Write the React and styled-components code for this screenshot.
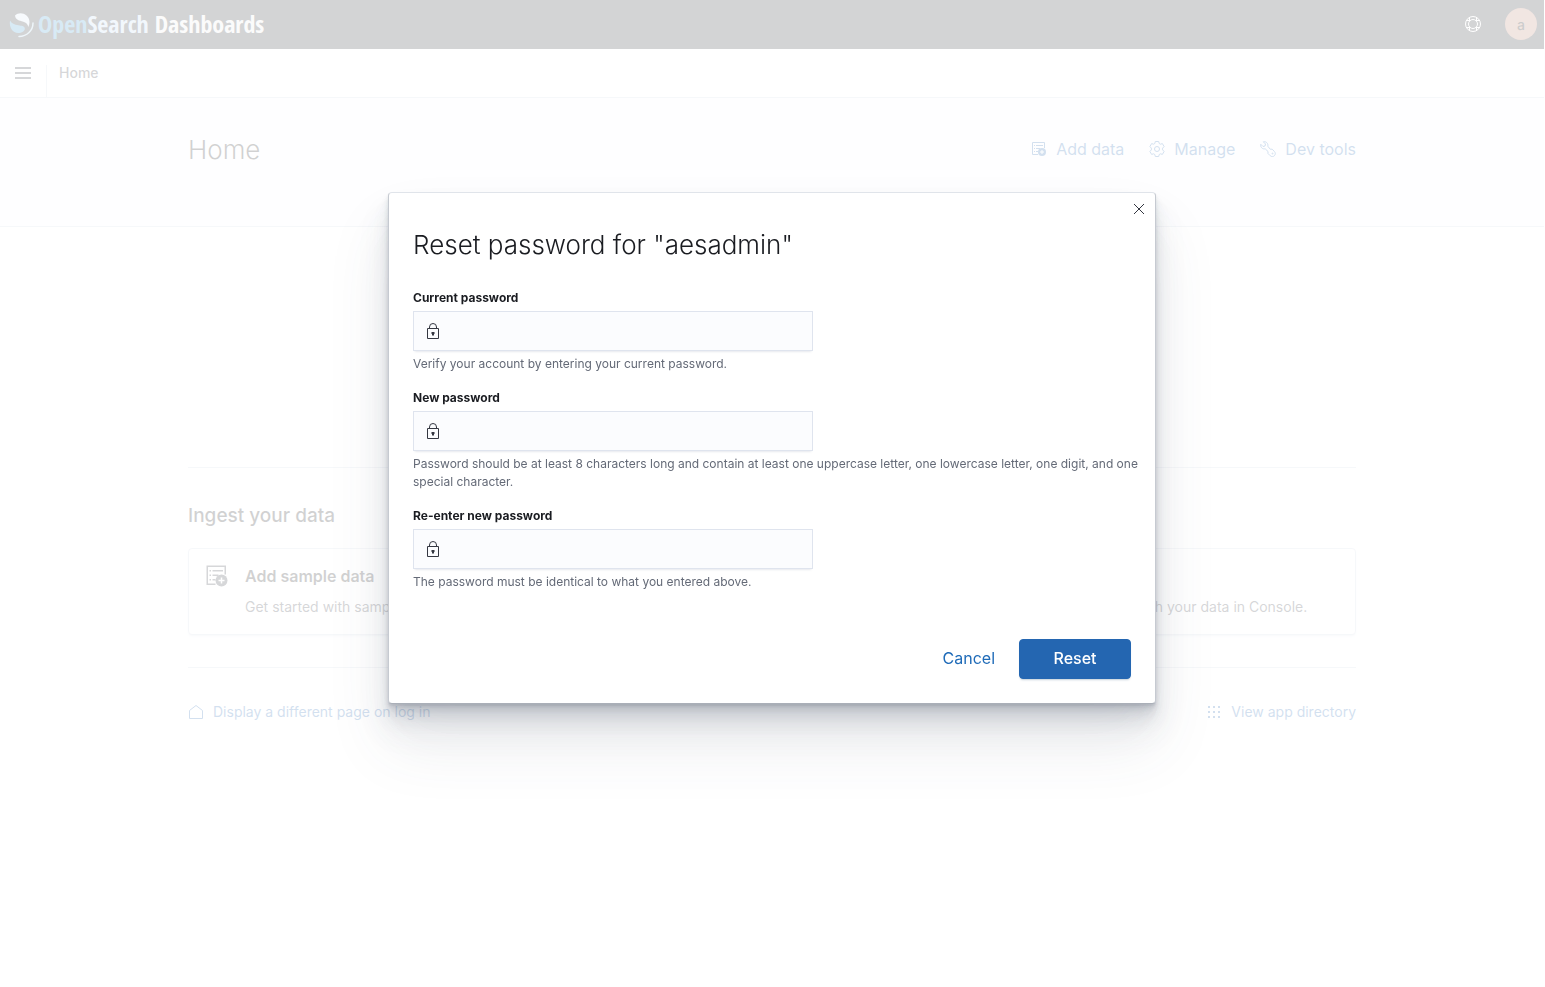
import React, { useState } from "react";
import styled, { createGlobalStyle } from "styled-components";

const GlobalStyle = createGlobalStyle`
  * {
    box-sizing: border-box;
  }

  body {
    margin: 0;
    padding-right: 1px;
    background-color: #fcfdfe;
    color: #1a1c21;
    font-family: Inter, "Liberation Sans", sans-serif;
    font-size: 14px;
  }

  button,
  input {
    font-family: inherit;
  }

  h1,
  h2,
  h3,
  p {
    margin: 0;
  }
`;

const LogoMark = () => (
  <svg width="26" height="28" viewBox="0 0 26 28" aria-hidden="true">
    <path
      d="M2 10.500C.800 17.500 5 23 10 23c4 0 7-2 6.800-4.500-.3-2.800-3.300-2.500-6.300-3.200C6.500 14.500 3.500 13.500 2 10.500z"
      fill="#3c98cc"
    />
    <path
      d="M7 5.500C10 2.500 15 2.500 18.500 5.500c3.500 3.200 3.700 7.500 1.800 11.500-.5-3-2.300-4.500-5-5.300C11 10.500 7.500 10 7 5.500z"
      fill="#d4e4f2"
    />
    <path
      d="M25 13c0 7.500-6 13.500-14 13.500"
      fill="none"
      stroke="#a8cde4"
      strokeWidth="1.500"
      strokeLinecap="round"
    />
  </svg>
);

const HelpIcon = () => (
  <svg width="16" height="16" viewBox="0 0 16 16" fill="none" stroke="#fff" aria-hidden="true">
    <circle cx="8" cy="8" r="7.500" />
    <circle cx="8" cy="8" r="4.500" />
    <path d="M4.500 1.500v3.500M1.500 4.500H5M11.500 1.500V5M14.500 4.500H11M4.500 14.500V11M1.500 11.500H5M11.500 14.500V11M14.500 11.500H11" />
  </svg>
);

const MenuIcon = () => (
  <svg width="16" height="12" viewBox="0 0 16 12" fill="currentColor" aria-hidden="true">
    <path d="M0 0h16v2H0zM0 5h16v2H0zM0 10h16v2H0z" />
  </svg>
);

const AddDataIcon = ({ size = 16 }) => (
  <svg width={size} height={size} viewBox="0 0 16 16" fill="none" aria-hidden="true">
    <path
      d="M7 13.500H1.500v-12h12V7M3 4.500h1M5 4.500h7M3 7.500h1M5 7.500h4M3 10.500h1M5 10.500h2"
      stroke="currentColor"
    />
    <circle cx="11" cy="11" r="4" fill="currentColor" />
    <path d="M11 9v4M9 11h4" stroke="#fff" />
  </svg>
);

const GearIcon = () => (
  <svg width="16" height="16" viewBox="0 0 16 16" fill="none" stroke="currentColor" aria-hidden="true">
    <path
      d="M6.300.500h3.400l.5 2 1.200.7 2-.6 1.700 3-1.500 1.500v1.800l1.500 1.500-1.700 3-2-.6-1.200.7-.5 2H6.300l-.5-2-1.200-.7-2 .6-1.700-3 1.500-1.500V7.100L.9 5.600l1.700-3 2 .6 1.200-.7z"
      strokeLinejoin="round"
    />
    <circle cx="8" cy="8" r="2.500" />
  </svg>
);

const WrenchIcon = () => (
  <svg width="16" height="16" viewBox="0 0 16 16" fill="none" stroke="currentColor" aria-hidden="true">
    <path
      d="M3.300.800 5.500 3 5 5l-2 .5L.800 3.300C0 6 2.500 8.500 5.200 7.800L8 10.500v2l2.200 2.200c1.200 1.200 3 1.200 4.200 0s1.200-3 0-4.200L12.200 8.200h-2L7.800 5.200C8.500 2.500 6 0 3.300.800z"
      strokeLinejoin="round"
    />
    <circle cx="12.500" cy="12.500" r="0.500" />
  </svg>
);

const HomeIcon = () => (
  <svg width="16" height="16" viewBox="0 0 16 16" fill="none" stroke="currentColor" aria-hidden="true">
    <path d="M1.500 14.500V6.500L8 1.500l6.500 5v8z" strokeLinejoin="round" />
  </svg>
);

const AppsIcon = () => (
  <svg width="16" height="16" viewBox="0 0 16 16" fill="currentColor" aria-hidden="true">
    <path d="M2 2h2v2H2zM7 2h2v2H7zM12 2h2v2h-2zM2 7h2v2H2zM7 7h2v2H7zM12 7h2v2h-2zM2 12h2v2H2zM7 12h2v2H7zM12 12h2v2h-2z" />
  </svg>
);

const ConsoleIcon = () => (
  <svg width="24" height="24" viewBox="0 0 16 16" fill="none" stroke="currentColor" aria-hidden="true">
    <path d="M1.500 2.500h13v11h-13zM4 6l2 2-2 2M8 10.500h4" />
  </svg>
);

const LockIcon = () => (
  <svg width="16" height="16" viewBox="0 0 16 16" fill="none" stroke="#343741" aria-hidden="true">
    <path d="M2.500 5.500h11v10h-11zM4.500 5.500V4a3.500 3.500 0 0 1 7 0v1.500" />
    <path d="M6.500 9h3v2h-.5v1.500h-2V11h-.5z" fill="#343741" stroke="none" />
  </svg>
);

const CloseIcon = () => (
  <svg width="16" height="16" viewBox="0 0 16 16" fill="none" stroke="#343741" aria-hidden="true">
    <path d="M3 3l10 10M13 3L3 13" />
  </svg>
);

const fields = [
  {
    id: "current-password",
    label: "Current password",
    help: "Verify your account by entering your current password.",
  },
  {
    id: "new-password",
    label: "New password",
    help: "Password should be at least 8 characters long and contain at least one uppercase letter, one lowercase letter, one digit, and one special character.",
  },
  {
    id: "reenter-new-password",
    label: "Re-enter new password",
    help: "The password must be identical to what you entered above.",
  },
];

const PasswordField = ({ id, label, help }) => {
  const [value, setValue] = useState("");

  return (
    <FormRow>
      <Label htmlFor={id}>{label}</Label>
      <InputWrap>
        <InputIcon>
          <LockIcon />
        </InputIcon>
        <Input
          id={id}
          type="password"
          value={value}
          aria-describedby={`${id}-help`}
          onChange={(e) => setValue(e.target.value)}
        />
      </InputWrap>
      <HelpText id={`${id}-help`}>{help}</HelpText>
    </FormRow>
  );
};

const App = () => {
  return (
    <>
      <GlobalStyle />
      <TopBar>
        <Logo href="#home">
          <LogoMark />
          <LogoText>
            <LogoOpen>Open</LogoOpen>
            <LogoSearch>Search</LogoSearch> Dashboards
          </LogoText>
        </Logo>
        <TopActions>
          <IconButton aria-label="Help">
            <HelpIcon />
          </IconButton>
          <Avatar aria-label="Account">a</Avatar>
        </TopActions>
      </TopBar>
      <NavBar>
        <MenuButton aria-label="Toggle navigation">
          <MenuIcon />
        </MenuButton>
        <Breadcrumb>Home</Breadcrumb>
      </NavBar>

      <PageHeader>
        <Inner>
          <HeaderRow>
            <PageTitle>Home</PageTitle>
            <HeaderLinks>
              <TextLink href="#add" $large>
                <AddDataIcon />
                Add data
              </TextLink>
              <TextLink href="#manage" $large>
                <GearIcon />
                Manage
              </TextLink>
              <TextLink href="#tools" $large>
                <WrenchIcon />
                Dev tools
              </TextLink>
            </HeaderLinks>
          </HeaderRow>
        </Inner>
      </PageHeader>

      <PageBody>
        <Inner>
          <Rule />
          <SectionTitle>Ingest your data</SectionTitle>
          <Cards>
            <Card>
              <AddDataIcon size={24} />
              <CardText>
                <CardTitle>Add sample data</CardTitle>
                <CardDescription>
                  Get started with sample data, visualizations, and dashboards.
                </CardDescription>
              </CardText>
            </Card>
            <Card>
              <ConsoleIcon />
              <CardText>
                <CardTitle>Interact with the API</CardTitle>
                <CardDescription>
                  Skip cURL and use a JSON interface to work with your data in Console.
                </CardDescription>
              </CardText>
            </Card>
          </Cards>
          <Rule />
          <PageFooter>
            <TextLink href="#landing">
              <HomeIcon />
              Display a different page on log in
            </TextLink>
            <TextLink href="#directory">
              <AppsIcon />
              View app directory
            </TextLink>
          </PageFooter>
        </Inner>
      </PageBody>

      <Overlay>
        <Modal role="dialog" aria-modal="true" aria-labelledby="modal-title">
          <CloseButton aria-label="Close this modal window">
            <CloseIcon />
          </CloseButton>
          <ModalTitle id="modal-title">Reset password for "aesadmin"</ModalTitle>
          <Form>
            {fields.map((field) => (
              <PasswordField key={field.id} {...field} />
            ))}
          </Form>
          <ModalFooter>
            <CancelButton type="button">Cancel</CancelButton>
            <ResetButton type="button">Reset</ResetButton>
          </ModalFooter>
        </Modal>
      </Overlay>
    </>
  );
};

const TopBar = styled.header`
  display: flex;
  align-items: center;
  justify-content: space-between;
  height: 49px;
  padding: 0 7px 0 8px;
  border-bottom: 1px solid #25282f;
  background-color: #25282f;
`;

const Logo = styled.a`
  display: flex;
  align-items: center;
  gap: 4px;
  text-decoration: none;
`;

const LogoText = styled.span`
  color: #e8eaea;
  font-family: "Open Sans Condensed", "Liberation Sans Narrow", "Roboto Condensed", "Open Sans", sans-serif;
  font-size: 24px;
  font-weight: 700;
  line-height: 32px;
  white-space: nowrap;
`;

const LogoOpen = styled.span`
  color: #3c98cc;
`;

const LogoSearch = styled.span`
  color: #bdd6ee;
`;

const TopActions = styled.div`
  display: flex;
  align-items: center;
  gap: 16px;
`;

const IconButton = styled.button`
  display: flex;
  align-items: center;
  justify-content: center;
  width: 32px;
  height: 32px;
  padding: 0;
  border: 0;
  background: none;
`;

const Avatar = styled.button`
  width: 32px;
  height: 32px;
  padding: 0;
  border: 0;
  border-radius: 50%;
  background-color: #b8806e;
  color: #000;
  font-size: 14px;
  font-weight: 500;
`;

const NavBar = styled.nav`
  display: flex;
  align-items: flex-end;
  height: 49px;
  border-bottom: 1px solid #d3dae6;
  background-color: #fff;
  box-shadow: 0 2px 2px -1px rgba(152, 162, 179, 0.3);
`;

const MenuButton = styled.button`
  display: flex;
  justify-content: center;
  width: 47px;
  height: 32px;
  padding: 2px 0 0;
  border: 0;
  border-right: 1px solid #d3dae6;
  background: none;
  color: #343741;
`;

const Breadcrumb = styled.span`
  align-self: center;
  padding-left: 12px;
  color: #343741;
  font-weight: 500;
  line-height: 20px;
`;

const Inner = styled.div`
  max-width: 1200px;
  margin: 0 auto;
  padding: 0 16px;
`;

const PageHeader = styled.section`
  padding: 32px 0 56px;
  border-bottom: 1px solid #d3dae6;
  background-color: #fafbfd;
`;

const HeaderRow = styled.div`
  display: flex;
  justify-content: space-between;
`;

const PageTitle = styled.h1`
  font-size: 26px;
  font-weight: 300;
  line-height: 40px;
`;

const HeaderLinks = styled.div`
  display: flex;
  align-items: center;
  gap: 25px;
  height: 38px;
`;

const TextLink = styled.a`
  display: flex;
  align-items: center;
  gap: 9px;
  color: #2466b1;
  font-size: ${(props) => (props.$large ? "16px" : "14px")};
  line-height: 24px;
  text-decoration: none;
`;

const PageBody = styled.main`
  padding: 208px 0 32px;
`;

const Rule = styled.hr`
  height: 1px;
  margin: 32px 0;
  border: 0;
  background-color: #d3dae6;
`;

const SectionTitle = styled.h2`
  margin-bottom: 16px;
  font-size: 19px;
  font-weight: 500;
  line-height: 32px;
`;

const Cards = styled.div`
  display: grid;
  grid-template-columns: 1fr 1fr;
  gap: 16px;
`;

const Card = styled.article`
  display: flex;
  gap: 16px;
  padding: 15px 16px 17px;
  border: 1px solid #d3dae6;
  border-radius: 4px;
  background-color: #fff;
  box-shadow: 0 2px 2px -1px rgba(152, 162, 179, 0.3);
  color: #343741;
`;

const CardText = styled.div`
  min-width: 0;
`;

const CardTitle = styled.h3`
  margin-bottom: 8px;
  color: #1a1c21;
  font-size: 16px;
  font-weight: 600;
  line-height: 24px;
`;

const CardDescription = styled.p`
  line-height: 21px;
`;

const PageFooter = styled.footer`
  display: flex;
  justify-content: space-between;
`;

const Overlay = styled.div`
  position: fixed;
  inset: 0;
  display: flex;
  align-items: center;
  justify-content: center;
  padding: 0 1px 92px 0;
  background-color: rgba(255, 255, 255, 0.8);
`;

const Modal = styled.div`
  position: relative;
  width: 768px;
  max-width: calc(100vw - 32px);
  padding: 36px 24px 24px;
  border: 1px solid #c6cad1;
  border-top-color: #e0e4ea;
  border-bottom-color: #aaafb8;
  border-radius: 4px;
  background-color: #fff;
  box-shadow:
    0 40px 64px 0 rgba(65, 78, 101, 0.1),
    0 24px 32px 0 rgba(65, 78, 101, 0.1),
    0 16px 16px 0 rgba(65, 78, 101, 0.1),
    0 8px 8px 0 rgba(65, 78, 101, 0.1),
    0 4px 4px 0 rgba(65, 78, 101, 0.1),
    0 2px 2px 0 rgba(65, 78, 101, 0.1);
`;

const CloseButton = styled.button`
  position: absolute;
  top: 4px;
  right: 4px;
  display: flex;
  align-items: center;
  justify-content: center;
  width: 24px;
  height: 24px;
  padding: 0;
  border: 0;
  background: none;
`;

const ModalTitle = styled.h1`
  font-size: 26px;
  font-weight: 300;
  line-height: 32px;
`;

const Form = styled.form`
  display: flex;
  flex-direction: column;
  gap: 16px;
  margin: 28px 0 48px;
`;

const FormRow = styled.div`
  display: flex;
  flex-direction: column;
  gap: 4px;
`;

const Label = styled.label`
  align-self: flex-start;
  font-size: 12px;
  font-weight: 700;
  line-height: 18px;
`;

const InputWrap = styled.div`
  position: relative;
  max-width: 400px;
`;

const InputIcon = styled.span`
  position: absolute;
  top: 12px;
  left: 12px;
  display: flex;
`;

const Input = styled.input`
  display: block;
  width: 100%;
  height: 40px;
  padding: 12px 12px 12px 40px;
  border: 1px solid #dfe4ee;
  border-radius: 0;
  outline: 0;
  background-color: #fbfcfe;
  box-shadow: 0 1px 1px -1px rgba(152, 162, 179, 0.2), 0 3px 2px -2px rgba(152, 162, 179, 0.2);
  font-size: 14px;
`;

const HelpText = styled.p`
  margin-right: -16px;
  color: #646a77;
  font-size: 12px;
  line-height: 18px;
`;

const ModalFooter = styled.div`
  display: flex;
  align-items: center;
  justify-content: flex-end;
  gap: 16px;
`;

const CancelButton = styled.button`
  height: 40px;
  padding: 0 8px 2px;
  border: 0;
  background: none;
  color: #1f6bb8;
  font-size: 16px;
`;

const ResetButton = styled.button`
  min-width: 112px;
  height: 40px;
  padding: 0 12px 2px;
  border: 1px solid #2466b1;
  border-radius: 4px;
  background-color: #2466b1;
  box-shadow: 0 2px 2px -1px rgba(54, 97, 126, 0.3);
  color: #fff;
  font-size: 16px;
  font-weight: 500;
`;

export default App;
